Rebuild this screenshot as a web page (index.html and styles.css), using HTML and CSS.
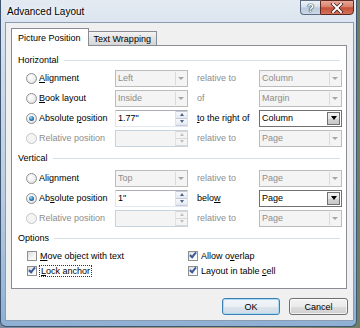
FILE: index.html
```html
<!DOCTYPE html>
<html lang="en">
<head>
    <meta charset="UTF-8">
    <meta name="viewport" content="width=device-width, initial-scale=1.0">
    <title>Advanced Layout</title>
    <link rel="stylesheet" href="styles.css">
</head>
<body>
    <div class="window">
        <div class="titlebar">
            <span class="title">Advanced Layout</span>
            <div class="caption-btns">
                <div class="cap help">?</div>
                <div class="cap close">
                    <svg width="14" height="10" viewBox="0 0 14 10">
                        <path d="M3 1 L11 9 M11 1 L3 9" stroke="#3a1410" stroke-width="3.4" stroke-linecap="square"/>
                        <path d="M3 1 L11 9 M11 1 L3 9" stroke="#fff" stroke-width="2" stroke-linecap="square"/>
                    </svg>
                </div>
            </div>
        </div>

        <div class="client">
            <div class="tabs">
                <div class="tab active">Picture Position</div>
                <div class="tab">Text Wrapping</div>
            </div>

            <div class="panel">
                <div class="group-head"><span>Horizontal</span></div>

                <div class="row">
                    <label class="opt"><span class="radio"></span><span><u>A</u>lignment</span></label>
                    <div class="field combo disabled"><span>Left</span><i class="drop"></i></div>
                    <span class="rel off">relative to</span>
                    <div class="field combo disabled"><span>Column</span><i class="drop"></i></div>
                </div>
                <div class="row">
                    <label class="opt"><span class="radio"></span><span><u>B</u>ook layout</span></label>
                    <div class="field combo disabled"><span>Inside</span><i class="drop"></i></div>
                    <span class="rel off">of</span>
                    <div class="field combo disabled"><span>Margin</span><i class="drop"></i></div>
                </div>
                <div class="row">
                    <label class="opt"><span class="radio checked"></span><span>Absolute <u>p</u>osition</span></label>
                    <div class="field spin"><span>1.77"</span><i class="spinner"><b class="up"></b><b class="down"></b></i></div>
                    <span class="rel"><u>t</u>o the right of</span>
                    <div class="field combo active"><span>Column</span><i class="drop"></i></div>
                </div>
                <div class="row">
                    <label class="opt off"><span class="radio disabled"></span><span>Relative position</span></label>
                    <div class="field spin disabled"><span></span><i class="spinner"><b class="up"></b><b class="down"></b></i></div>
                    <span class="rel off">relative to</span>
                    <div class="field combo disabled"><span>Page</span><i class="drop"></i></div>
                </div>

                <div class="group-head"><span>Vertical</span></div>

                <div class="row">
                    <label class="opt"><span class="radio"></span><span>Ali<u>g</u>nment</span></label>
                    <div class="field combo disabled"><span>Top</span><i class="drop"></i></div>
                    <span class="rel off">relative to</span>
                    <div class="field combo disabled"><span>Page</span><i class="drop"></i></div>
                </div>
                <div class="row">
                    <label class="opt"><span class="radio checked"></span><span>Ab<u>s</u>olute position</span></label>
                    <div class="field spin"><span>1"</span><i class="spinner"><b class="up"></b><b class="down"></b></i></div>
                    <span class="rel">belo<u>w</u></span>
                    <div class="field combo active"><span>Page</span><i class="drop"></i></div>
                </div>
                <div class="row">
                    <label class="opt off"><span class="radio disabled"></span><span>Relative position</span></label>
                    <div class="field spin disabled"><span></span><i class="spinner"><b class="up"></b><b class="down"></b></i></div>
                    <span class="rel off">relative to</span>
                    <div class="field combo disabled"><span>Page</span><i class="drop"></i></div>
                </div>

                <div class="group-head"><span>Options</span></div>

                <div class="checks">
                    <label class="chk"><span class="box"></span><span><u>M</u>ove object with text</span></label>
                    <label class="chk"><span class="box checked"></span><span>Allow o<u>v</u>erlap</span></label>
                    <label class="chk"><span class="box checked"></span><span class="focus"><u>L</u>ock anchor</span></label>
                    <label class="chk"><span class="box checked"></span><span>Layout in table <u>c</u>ell</span></label>
                </div>
            </div>

            <div class="buttons">
                <button class="btn default">OK</button>
                <button class="btn">Cancel</button>
            </div>
        </div>
    </div>
</body>
</html>
```

FILE: styles.css
```css
body {
    margin: 0;
    width: 360px;
    height: 328px;
    overflow: hidden;
    background: linear-gradient(90deg, #7d8ca2 0%, #a79a74 60%, #6f7f64 100%);
    font-family: "Liberation Sans", Arial, sans-serif;
    font-size: 9px;
    color: #000;
}

.window {
    width: 357px;
    height: 327px;
    box-sizing: border-box;
    border: 1px solid #3f5672;
    border-top: none;
    border-radius: 0 0 6px 6px;
    background: linear-gradient(180deg, #e3eaf2 0%, #cfdcea 20%, #b9cde2 60%, #8fb0d3 100%);
    display: flex;
    flex-direction: column;
}

/* title bar */
.titlebar {
    height: 22px;
    display: flex;
    align-items: flex-start;
    padding-left: 6px;
}
.title {
    font-size: 10px;
    line-height: 10px;
    margin-top: 7px;
    text-shadow: 0 0 6px #fff, 0 0 3px #fff;
}
.caption-btns {
    margin-left: auto;
    margin-right: 2px;
    display: flex;
}
.cap {
    height: 15px;
    box-sizing: border-box;
    display: flex;
    align-items: center;
    justify-content: center;
}
.help {
    width: 20px;
    border: 1px solid #5d6c80;
    border-right: none;
    border-radius: 0 0 0 4px;
    background: linear-gradient(180deg, #eef3f8 0%, #d3dfec 48%, #b8cadd 52%, #cbd9e8 100%);
    color: #fff;
    font-weight: bold;
    font-size: 11px;
    text-shadow: 0 0 1px #27374a, 0 0 1px #27374a, 0 0 1px #27374a;
}
.close {
    width: 34px;
    border: 1px solid #5b2a22;
    border-radius: 0 0 4px 0;
    background: linear-gradient(180deg, #e9a999 0%, #d9806d 45%, #c2503a 52%, #d6735a 100%);
}

/* client area */
.client {
    flex: 1;
    margin: 0 2px 5px 4px;
    border: 1px solid #8a9cb2;
    background: #f0f0f0;
    padding: 5px 5px 5px 5px;
    display: flex;
    flex-direction: column;
}
.tabs {
    height: 17px;
    display: flex;
    align-items: flex-end;
}
.tab {
    height: 14px;
    box-sizing: border-box;
    border: 1px solid #898c95;
    border-bottom: none;
    padding: 2px 5px 0 5px;
    background: linear-gradient(180deg, #f3f3f3, #e2e2e2 50%, #d6d6d6);
}
.tab.active {
    height: 18px;
    margin-bottom: -1px;
    padding: 4px 7px 0 6px;
    background: #fff;
    position: relative;
    z-index: 1;
}
.tab + .tab {
    border-left: none;
}

.panel {
    flex: 1;
    margin-right: 1px;
    border: 1px solid #898c95;
    background: #fff;
}

.group-head {
    height: 20px;
    display: flex;
    align-items: center;
    padding: 0 6px;
}
.group-head:first-child {
    height: 16px;
    margin-top: 6px;
}
.group-head::after {
    content: "";
    flex: 1;
    height: 1px;
    margin-left: 5px;
    background: #d5dfe5;
}

.row {
    height: 20px;
    display: grid;
    grid-template-columns: 89px 73px 71px 83px;
    align-items: center;
    padding-left: 14px;
}
.opt {
    display: flex;
    align-items: center;
    gap: 2px;
}
.off {
    color: #8d8d8d;
}
.rel {
    padding-left: 9px;
}

/* radio buttons */
.radio {
    width: 11px;
    height: 11px;
    box-sizing: border-box;
    border-radius: 50%;
    border: 1px solid #8e8f8f;
    background: radial-gradient(circle at 40% 35%, #fff 0%, #f0f0f0 50%, #d6d6d6 100%);
    display: flex;
    align-items: center;
    justify-content: center;
}
.radio.checked::after {
    content: "";
    width: 5px;
    height: 5px;
    border-radius: 50%;
    background: radial-gradient(circle at 40% 35%, #a8dcfb 0%, #2e86c8 45%, #0d3c6e 100%);
}
.radio.disabled {
    border-color: #c4c4c4;
    background: #f4f4f4;
}

/* text fields and combos */
.field {
    height: 17px;
    box-sizing: border-box;
    border: 1px solid #abadb3;
    border-color: #abadb3 #dbdfe6 #e3e9ef #e2e3ea;
    background: #fff;
    display: flex;
    align-items: center;
    padding-left: 2px;
}
.field span {
    flex: 1;
}
.field.disabled {
    border: 1px solid #bcbcbc;
    background: #f4f4f4;
    color: #8d8d8d;
}
.field.spin.disabled {
    border-color: #c8d3e0;
}
.combo.active {
    border: 1px solid #707070;
    padding-right: 1px;
}

.drop {
    width: 11px;
    height: 13px;
    margin-right: 1px;
    box-sizing: border-box;
    border-left: 1px solid #dadada;
    display: flex;
    align-items: center;
    justify-content: center;
}
.drop::after {
    content: "";
    border-left: 3px solid transparent;
    border-right: 3px solid transparent;
    border-top: 3px solid #a8a8a8;
}
.combo.active .drop {
    width: 13px;
    height: 13px;
    margin-right: 0;
    border: 1px solid #707070;
    background: linear-gradient(180deg, #f2f2f2, #e4e4e4 50%, #d2d2d2 51%, #c8c8c8);
}
.combo.active .drop::after {
    border-top-color: #000;
    border-left-width: 3.5px;
    border-right-width: 3.5px;
    border-top-width: 4px;
}

.spinner {
    width: 11px;
    height: 15px;
    display: flex;
    flex-direction: column;
    border-left: 1px solid #dde3ea;
}
.spinner b {
    flex: 1;
    display: flex;
    align-items: center;
    justify-content: center;
    background: linear-gradient(180deg, #f6f8fb, #e4e9f0);
    border: 1px solid #c2ccd8;
    border-left: none;
    border-right: none;
}
.spinner b + b {
    border-top: none;
}
.spinner .up::after {
    content: "";
    border-left: 2.5px solid transparent;
    border-right: 2.5px solid transparent;
    border-bottom: 3px solid #4a6584;
}
.spinner .down::after {
    content: "";
    border-left: 2.5px solid transparent;
    border-right: 2.5px solid transparent;
    border-top: 3px solid #4a6584;
}
.field.disabled .spinner b::after {
    border-top-color: #c0c0c0;
    border-bottom-color: #c0c0c0;
}
.field.disabled .spinner b {
    background: #f4f4f4;
    border-color: #d8d8d8;
}

/* options */
.checks {
    display: grid;
    grid-template-columns: 161px 1fr;
    grid-auto-rows: 15px;
    padding-left: 15px;
    align-items: center;
}
.chk {
    display: flex;
    align-items: center;
    gap: 3px;
}
.box {
    width: 10px;
    height: 10px;
    box-sizing: border-box;
    border: 1px solid #8f8f8f;
    background: linear-gradient(135deg, #dcdcdc, #f6f6f6 60%, #fff);
    display: flex;
    align-items: center;
    justify-content: center;
}
.box.checked::after {
    content: "";
    width: 2px;
    height: 5px;
    margin-top: -2px;
    border-right: 2px solid #3b5a9d;
    border-bottom: 2px solid #3b5a9d;
    transform: rotate(40deg);
}
.focus {
    outline: 1px dotted #333;
    outline-offset: 0;
    padding: 0 1px;
}

/* buttons */
.buttons {
    height: 17px;
    margin-top: 9px;
    display: flex;
    justify-content: flex-end;
    gap: 9px;
}
.btn {
    width: 59px;
    height: 17px;
    padding: 0;
    font-family: inherit;
    font-size: 9px;
    color: #000;
    border: 1px solid #707070;
    border-radius: 3px;
    background: linear-gradient(180deg, #f2f2f2 0%, #ebebeb 50%, #dddddd 51%, #cfcfcf 100%);
    box-shadow: inset 0 0 0 1px rgba(255, 255, 255, 0.7);
}
.btn.default {
    width: 58px;
    border-color: #3c7fb1;
    background: linear-gradient(180deg, #f2f6f9 0%, #e9eff4 50%, #dbe4ec 51%, #d0dce7 100%);
    box-shadow: inset 0 0 0 1px #a9d9f5;
}
```
